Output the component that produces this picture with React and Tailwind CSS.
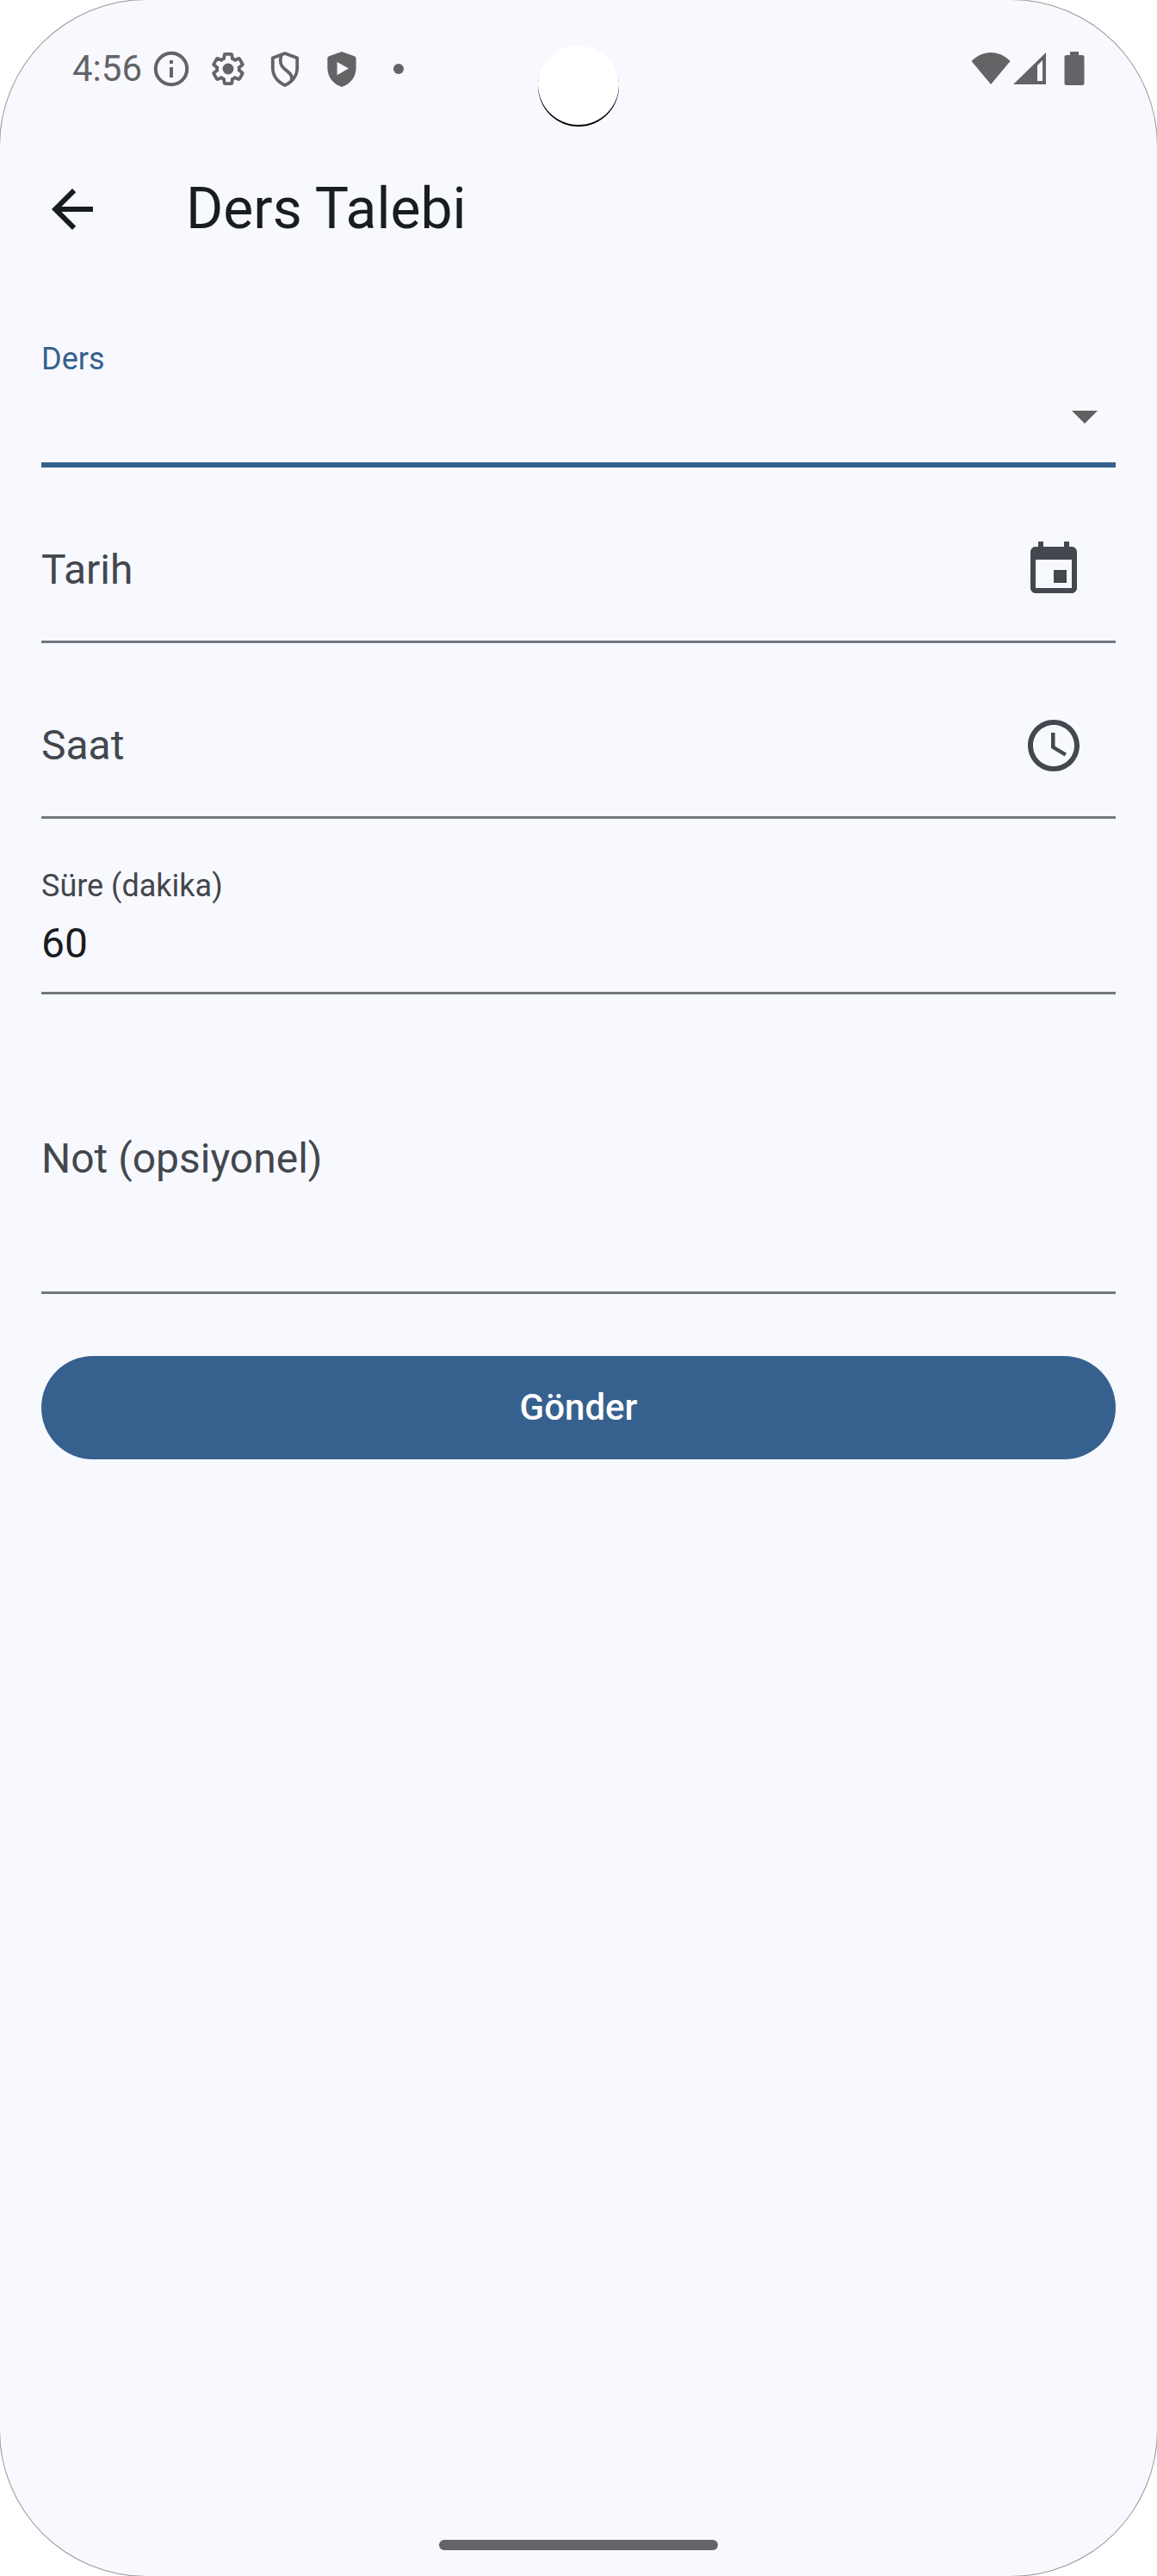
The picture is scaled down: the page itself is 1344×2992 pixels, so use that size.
import React, { useState } from 'react';

function StatusIcon({ children }) {
  return (
    <svg viewBox="0 0 24 24" className="size-12 shrink-0" fill="currentColor" aria-hidden="true">
      {children}
    </svg>
  );
}

const GEAR =
  'M19.43 12.98c.04-.32.07-.64.07-.98 0-.34-.03-.66-.07-.98l2.11-1.65c.19-.15.24-.42.12-.64l-2-3.46c-.09-.16-.26-.25-.44-.25-.06 0-.12.01-.17.03l-2.49 1c-.52-.4-1.08-.73-1.69-.98l-.38-2.65C14.46 2.18 14.25 2 14 2h-4c-.25 0-.46.18-.49.42l-.38 2.65c-.61.25-1.17.59-1.69.98l-2.49-1c-.06-.02-.12-.03-.18-.03-.17 0-.34.09-.43.25l-2 3.46c-.13.22-.07.49.12.64l2.11 1.65c-.04.32-.07.65-.07.98 0 .33.03.66.07.98l-2.11 1.65c-.19.15-.24.42-.12.64l2 3.46c.09.16.26.25.44.25.06 0 .12-.01.17-.03l2.49-1c.52.4 1.08.73 1.69.98l.38 2.65c.03.24.24.42.49.42h4c.25 0 .46-.18.49-.42l.38-2.65c.61-.25 1.17-.59 1.69-.98l2.49 1c.06.02.12.03.18.03.17 0 .34-.09.43-.25l2-3.46c.12-.22.07-.49-.12-.64l-2.11-1.65z';

function StatusBar() {
  return (
    <div className="relative flex h-[159px] items-center justify-between pr-[84px] pl-[84px] text-[#636466]">
      <div className="flex items-center">
        <span className="w-[91px] text-[42px] leading-[48px]">4:56</span>
        <div className="flex items-center gap-[18px]">
          <StatusIcon>
            <circle cx="12" cy="12" r="9.1" fill="none" stroke="currentColor" strokeWidth="2" />
            <path d="M11 7h2v2h-2zM11 11h2v6h-2z" />
          </StatusIcon>
          <StatusIcon>
            <g transform="translate(12 12) scale(.86) translate(-12 -12)">
              <path d={GEAR} fill="none" stroke="currentColor" strokeWidth="2.2" />
            </g>
            <circle cx="12" cy="12" r="3.2" />
          </StatusIcon>
          <StatusIcon>
            <g fill="none" stroke="currentColor" strokeWidth="1.9" strokeLinejoin="round">
              <path d="M12 3 4.9 5.6v5.8c0 4.5 2.9 8.2 7.1 10.1 4.2-1.9 7.1-5.6 7.1-10.1V5.600z" />
              <path d="M9.900 4C8.600 8 9.500 10.200 12 12.300c2.500 2 4.700 3.500 3.800 6.400" />
            </g>
          </StatusIcon>
          <StatusIcon>
            <path
              fillRule="evenodd"
              d="M12 2 4.600 4.600Q3.700 5 3.700 5.900V11.500C3.700 16.700 7 20.900 12 22.500c5-1.600 8.300-5.800 8.300-11V5.900q0-.9-.9-1.300zM9.300 8v7.600L16 11.800z"
            />
          </StatusIcon>
          <StatusIcon>
            <circle cx="12" cy="12" r="3" />
          </StatusIcon>
        </div>
      </div>

      <div className="absolute top-[53px] left-1/2 size-[94px] -translate-x-1/2 rounded-full bg-white shadow-[inset_0_-2px_0_#000]" />

      <div className="flex items-center">
        <svg viewBox="0 0 46 40" className="h-10 w-[46px]" fill="currentColor" aria-hidden="true">
          <path d="M.5 11C13-2.500 33-2.500 45.500 11L23 38z" />
        </svg>
        <svg viewBox="0 0 38 40" className="ml-[3px] h-10 w-[38px]" fill="currentColor" aria-hidden="true">
          <path fillRule="evenodd" d="M0 38 38 1V38zM28 16v18h6V10z" />
        </svg>
        <svg viewBox="0 0 24 40" className="ml-[21px] h-10 w-6" fill="currentColor" aria-hidden="true">
          <path d="M7 0h10v4h4q2.500 0 2.500 2.500v30q0 2.500-2.500 2.500H3Q.5 39 .5 36.500v-30Q.5 4 3 4h4z" />
        </svg>
      </div>
    </div>
  );
}

function Glyph({ d, className = '' }) {
  return (
    <svg viewBox="0 0 24 24" className={`size-[72px] shrink-0 ${className}`} fill="currentColor" aria-hidden="true">
      <path d={d} />
    </svg>
  );
}

const ARROW_BACK = 'M20 11H7.830l5.590-5.590L12 4l-8 8 8 8 1.410-1.410L7.830 13H20v-2z';
const DROP_DOWN = 'M7 10l5 5 5-5z';
const EVENT =
  'M17 12h-5v5h5v-5zM16 1v2H8V1H6v2H5c-1.110 0-1.990.9-1.990 2L3 19c0 1.100.89 2 2 2h14c1.100 0 2-.9 2-2V5c0-1.100-.9-2-2-2h-1V1h-2zm3 18H5V8h14v11z';
const CLOCK =
  'M11.990 2C6.470 2 2 6.480 2 12s4.470 10 9.990 10C17.520 22 22 17.520 22 12S17.520 2 11.990 2zM12 20c-4.420 0-8-3.580-8-8s3.580-8 8-8 8 3.580 8 8-3.580 8-8 8zm.5-13H11v6l5.250 3.150.75-1.230-4.500-2.670z';

function PickerField({ id, label, icon, buttonLabel }) {
  return (
    <div className="flex h-[168px] items-center border-b-3 border-[#73777f] text-[#43474e]">
      <label htmlFor={id} className="text-5xl leading-[72px]">
        {label}
      </label>
      <input id={id} type="text" readOnly className="h-full min-w-0 flex-1 bg-transparent text-5xl text-[#191c20] outline-none" />
      <button type="button" aria-label={buttonLabel} className="flex size-36 items-center justify-center rounded-full">
        <Glyph d={icon} />
      </button>
    </div>
  );
}

export default function App() {
  const [duration, setDuration] = useState('60');

  return (
    <div className="overflow-hidden bg-white">
      <div className="flex min-h-screen flex-col rounded-[170px] bg-[#f8f9ff] font-['Roboto',sans-serif] text-[#191c20] shadow-[0_0_0_1px_rgba(0,0,0,0.4)]">
        <StatusBar />

        <header className="flex h-[168px] items-center px-12">
          <button type="button" aria-label="Geri">
            <Glyph d={ARROW_BACK} />
          </button>
          <h1 className="ml-24 text-[66px] leading-[84px]">Ders Talebi</h1>
        </header>

        <main className="flex-1 p-12">
          <form className="flex flex-col gap-9" onSubmit={(e) => e.preventDefault()}>
            <div className="flex h-[168px] flex-col justify-between border-b-6 border-[#36618e] pt-6 pb-[18px]">
              <label htmlFor="ders" className="text-4xl leading-9 text-[#36618e]">
                Ders
              </label>
              <div className="flex items-center">
                <select
                  id="ders"
                  defaultValue=""
                  className="h-[72px] min-w-0 flex-1 appearance-none bg-transparent text-5xl outline-none"
                >
                  <option value="" />
                </select>
                <Glyph d={DROP_DOWN} className="text-[#616161]" />
              </div>
            </div>

            <PickerField id="tarih" label="Tarih" icon={EVENT} buttonLabel="Tarih seç" />
            <PickerField id="saat" label="Saat" icon={CLOCK} buttonLabel="Saat seç" />

            <div className="flex h-[168px] flex-col justify-between border-b-3 border-[#73777f] pt-6 pb-[21px]">
              <label htmlFor="sure" className="text-4xl leading-9 text-[#43474e]">
                Süre (dakika)
              </label>
              <input
                id="sure"
                type="text"
                inputMode="numeric"
                value={duration}
                onChange={(e) => setDuration(e.target.value)}
                className="h-[72px] w-full bg-transparent text-5xl outline-none"
              />
            </div>

            <div className="flex h-[312px] items-center border-b-3 border-[#73777f]">
              <label htmlFor="not" className="text-5xl leading-[72px] text-[#43474e]">
                Not (opsiyonel)
              </label>
              <textarea id="not" className="h-full min-w-0 flex-1 resize-none bg-transparent text-5xl outline-none" />
            </div>

            <button
              type="submit"
              className="mt-9 h-[120px] w-full rounded-full bg-[#36618e] text-[42px] leading-[60px] font-medium text-white"
            >
              Gönder
            </button>
          </form>
        </main>

        <div className="mb-[30px] h-3 w-[324px] self-center rounded-full bg-[#636466]" />
      </div>
    </div>
  );
}
